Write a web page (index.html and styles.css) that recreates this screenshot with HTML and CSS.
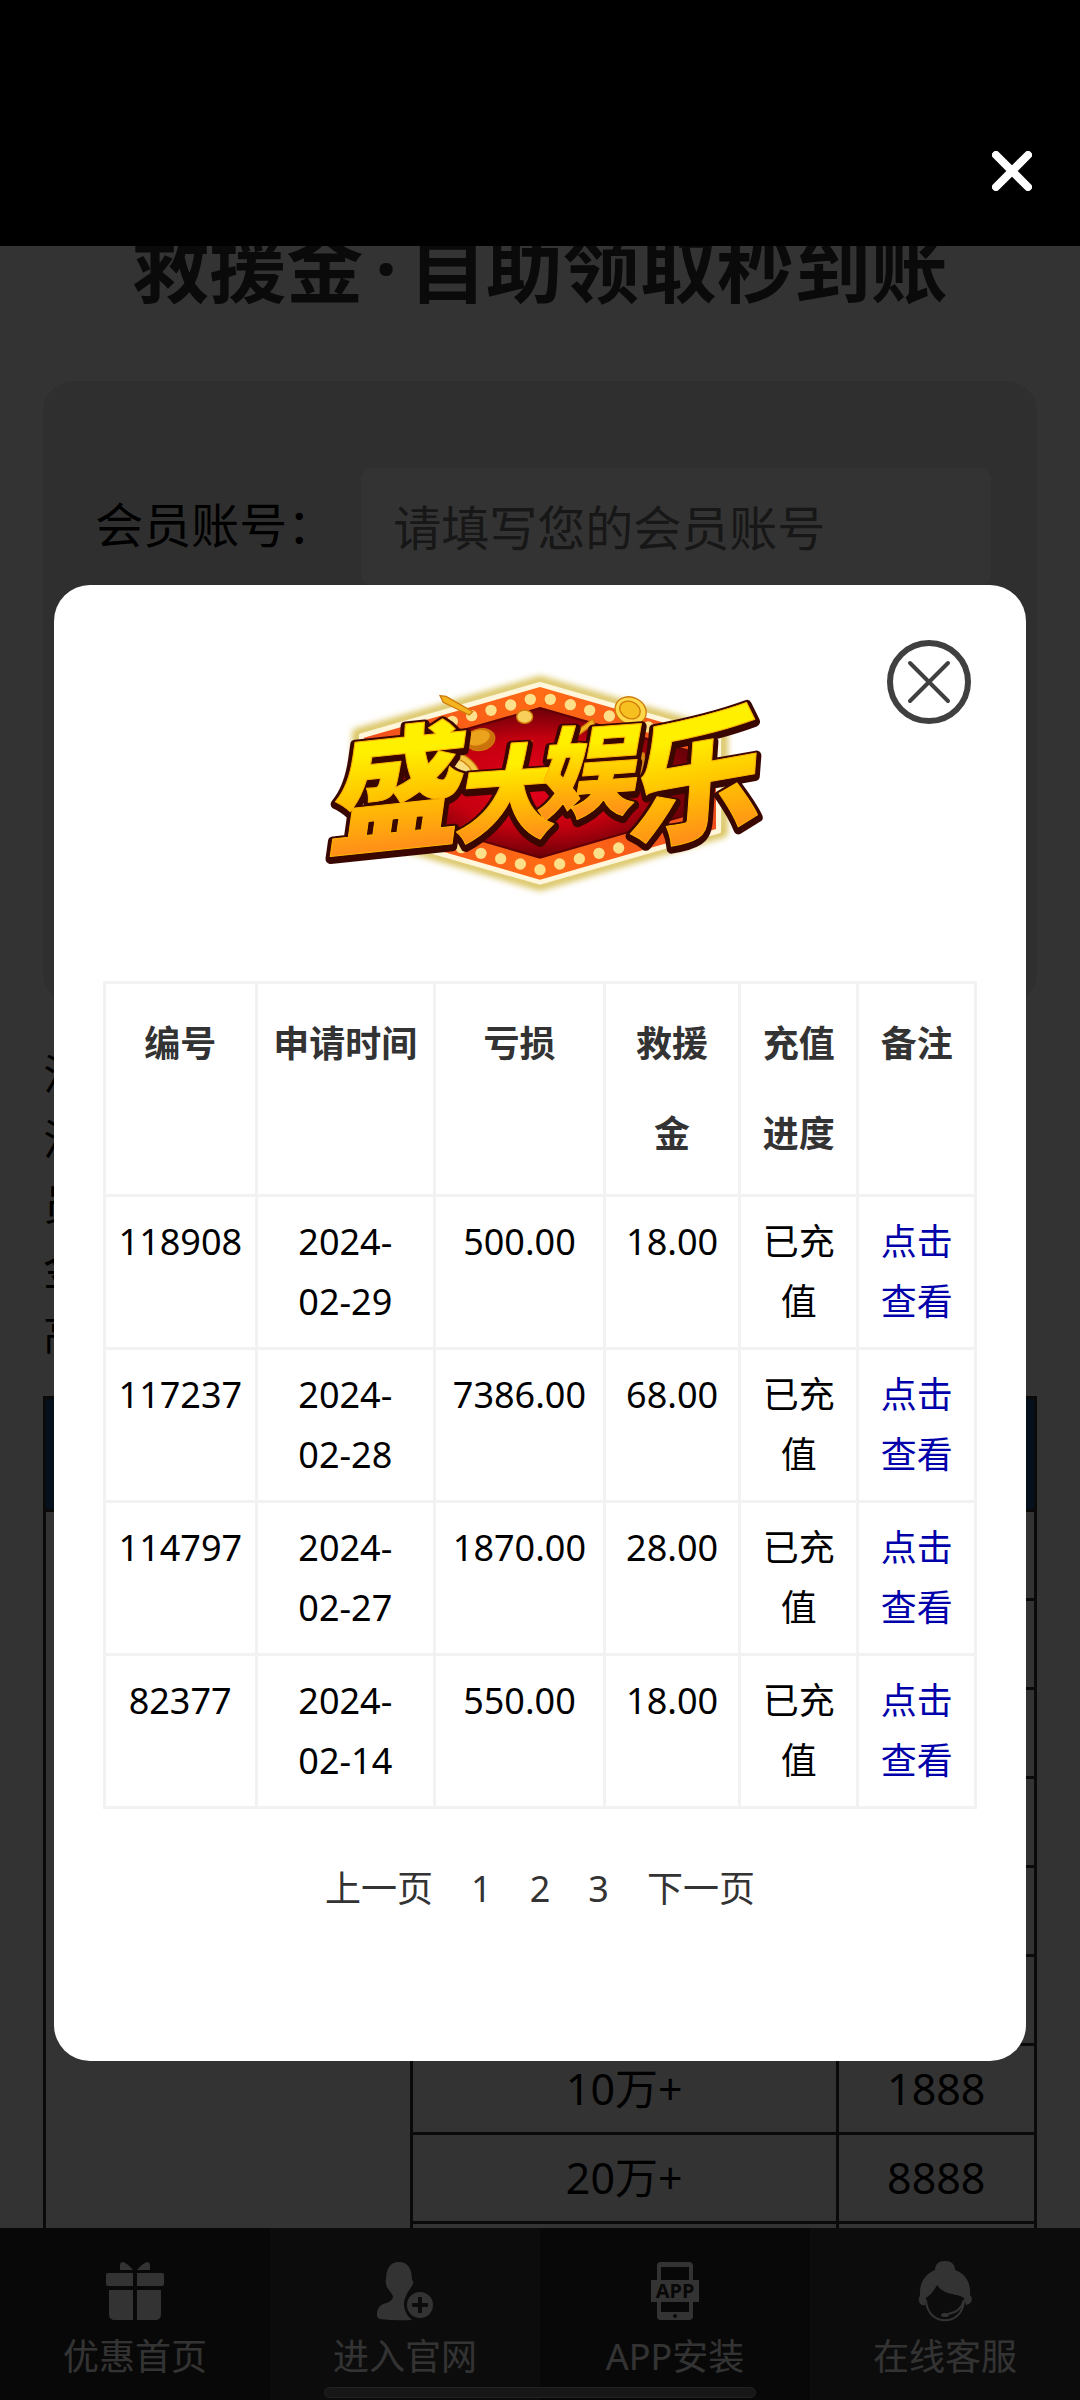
FILE: index.html
```html
<!DOCTYPE html>
<html lang="zh-CN">
<head>
    <meta charset="UTF-8">
    <meta name="viewport" content="width=device-width, initial-scale=1">
    <title>救援金</title>
    <link rel="stylesheet" href="styles.css">
</head>
<body>
    <header class="topbar">
        <button class="topbar-close" type="button" aria-label="关闭页面">
            <svg viewBox="0 0 40 40"><path d="M4 4L36 36M36 4L4 36"/></svg>
        </button>
    </header>

    <div class="stage">
        <main class="page">
            <h1>救援金<span class="dot">·</span>自助领取秒到账</h1>
            <form class="card">
                <label for="account">会员账号：</label>
                <input type="text" id="account" placeholder="请填写您的会员账号">
            </form>
            <p class="rules">注<br>活<br>员<br>金<br>高</p>
            <table class="bonus">
                <colgroup>
                    <col class="w-37"><col class="w-43"><col class="w-20">
                </colgroup>
                <thead>
                    <tr><th colspan="3"></th></tr>
                </thead>
                <tbody>
                    <tr><td rowspan="9"></td><td></td><td></td></tr>
                    <tr><td></td><td></td></tr>
                    <tr><td></td><td></td></tr>
                    <tr><td></td><td></td></tr>
                    <tr><td></td><td></td></tr>
                    <tr><td></td><td></td></tr>
                    <tr><td>10万+</td><td>1888</td></tr>
                    <tr><td>20万+</td><td>8888</td></tr>
                    <tr><td></td><td></td></tr>
                </tbody>
            </table>
        </main>

        <nav class="tabbar">
            <a href="#">
                <svg viewBox="0 0 58 58">
                    <path d="M27 8Q21 1 17 0Q14 0 14 4V8ZM31 8Q37 1 41 0Q44 0 44 4V8Z"/>
                    <path d="M2 11H27V24H2Q0 24 0 22V13Q0 11 2 11ZM31 11H56Q58 11 58 13V22Q58 24 56 24H31Z"/>
                    <path d="M3 28H27V58H9Q3 58 3 52ZM31 28H55V52Q55 58 49 58H31Z"/>
                </svg>
                <span>优惠首页</span>
            </a>
            <a href="#">
                <svg viewBox="0 0 58 58">
                    <path d="M23 0C32 0 36 7 36 18C39 20 36 24 34 27Q31 31 30 34C26 42 28 51 36 58Q18 59 4 57Q1 56 1 53C1 38 15 44 17 35Q17 33 13 28Q10 25 10 21Q9 19 10 18C10 7 14 0 23 0Z"/>
                    <path fill-rule="evenodd" d="M44 30A13 13 0 1 1 44 56A13 13 0 1 1 44 30ZM42 35V41H36V45H42V51H46V45H52V41H46V35Z"/>
                </svg>
                <span>进入官网</span>
            </a>
            <a href="#">
                <svg viewBox="0 0 58 58">
                    <path fill-rule="evenodd" d="M15 0H43Q47 0 47 4V54Q47 58 43 58H15Q11 58 11 54V4Q11 0 15 0ZM15 5V18H43V5ZM15 39V50H43V39Z"/>
                    <path d="M5 18H53V40H5Z"/>
                    <circle class="cut" cx="29" cy="54" r="2"/>
                    <text class="cut app-text" x="29" y="36" text-anchor="middle">APP</text>
                </svg>
                <span>APP安装</span>
            </a>
            <a href="#">
                <svg viewBox="0 0 58 58">
                    <path d="M19 8C19 2 23 -1 29 -1S39 2 39 8C50 12 55 21 54 33Q57 36 55 40Q53 43 50 43L48 36C42 31 28 34 21 23Q17 31 10 36L9 43Q4 44 3 39Q2 36 4 34C3 21 9 12 19 8Z"/>
                    <path class="line" d="M10 38C11 65 47 65 48 38"/>
                    <path class="line" d="M48 38Q45 50 32 52"/>
                    <ellipse cx="29" cy="53" rx="4" ry="2"/>
                </svg>
                <span>在线客服</span>
            </a>
        </nav>

        <div class="overlay">
            <section class="dialog" role="dialog" aria-modal="true">
                <button class="dialog-close" type="button" aria-label="关闭">
                    <svg viewBox="0 0 86 86">
                        <circle cx="43" cy="43" r="39"/>
                        <path d="M24 24L62 62M62 24L24 62"/>
                    </svg>
                </button>

                <svg class="logo" viewBox="72 80 1296 690" role="img" aria-label="盛大娱乐">
                    <defs>
                        <linearGradient id="gold" x1="0" y1="0" x2="0" y2="1">
                            <stop offset="0.3" stop-color="#fff000"/>
                            <stop offset="0.55" stop-color="#ffc400"/>
                            <stop offset="0.85" stop-color="#ff8c1a"/>
                        </linearGradient>
                        <radialGradient id="red">
                            <stop offset="0" stop-color="#e8001c"/>
                            <stop offset="0.6" stop-color="#c4000f"/>
                            <stop offset="1" stop-color="#6b0008"/>
                        </radialGradient>
                        <linearGradient id="rim" x1="0" y1="0" x2="1" y2="0">
                            <stop offset="0" stop-color="#f0501c"/>
                            <stop offset="0.5" stop-color="#ff6a14"/>
                            <stop offset="1" stop-color="#f0501c"/>
                        </linearGradient>
                        <filter id="glow" x="-10%" y="-10%" width="120%" height="120%">
                            <feGaussianBlur stdDeviation="10"/>
                        </filter>
                    </defs>
                    <!-- marquee board -->
                    <path d="M720 120L1270 278V578L720 738L170 578V278Z" fill="none" stroke="#d9c25c" stroke-width="26" stroke-linejoin="round" filter="url(#glow)"/>
                    <path d="M720 130L1258 284V574L720 728L182 574V284Z" fill="#fff6dc" stroke="#fff6dc" stroke-width="10" stroke-linejoin="round"/>
                    <path d="M720 140L1248 292V566L720 718L192 566V292Z" fill="url(#rim)"/>
                    <path d="M720 203L1190 338V516L720 652L250 516V338Z" fill="url(#red)" stroke="#5e0006" stroke-width="6"/>
                    <g fill="#ffe08a">
                        <circle cx="457" cy="243" r="17"/><circle cx="515" cy="226" r="17"/>
                        <circle cx="573" cy="210" r="17"/><circle cx="632" cy="194" r="17"/>
                        <circle cx="691" cy="177" r="17"/><circle cx="751" cy="177" r="17"/>
                        <circle cx="811" cy="193" r="17"/><circle cx="869" cy="210" r="17"/>
                        <circle cx="928" cy="227" r="17"/><circle cx="1045" cy="260" r="17"/>
                        <circle cx="1223" cy="320" r="17"/>
                        <circle cx="425" cy="606" r="17"/><circle cx="484" cy="622" r="17"/>
                        <circle cx="543" cy="639" r="17"/><circle cx="602" cy="655" r="17"/>
                        <circle cx="661" cy="671" r="17"/><circle cx="720" cy="688" r="17"/>
                        <circle cx="779" cy="671" r="17"/><circle cx="838" cy="655" r="17"/>
                        <circle cx="897" cy="639" r="17"/><circle cx="956" cy="623" r="17"/>
                    </g>
                    <!-- coins -->
                    <g fill="#f5b51e" stroke="#d07a0a" stroke-width="4">
                        <path d="M420 166L438 168L518 214L508 224L430 186Z"/>
                        <ellipse cx="542" cy="298" rx="43" ry="32" fill="#c9720c" transform="rotate(-15 542 298)"/>
                        <ellipse cx="534" cy="292" rx="38" ry="24" fill="#eba21c" transform="rotate(-15 534 292)"/>
                        <ellipse cx="674" cy="229" rx="24" ry="20" fill="#f7cf5a"/>
                        <ellipse cx="992" cy="211" rx="48" ry="40" fill="#ffd84a" transform="rotate(25 992 211)"/>
                        <ellipse cx="990" cy="209" rx="32" ry="25" fill="#f5c020" transform="rotate(25 990 209)"/>
                        <ellipse cx="475" cy="388" rx="74" ry="46" fill="#f3c545" transform="rotate(35 475 388)"/>
                        <ellipse cx="475" cy="388" rx="50" ry="28" fill="#f9dc7c" transform="rotate(35 475 388)"/>
                        <path d="M958 330L1032 338L1050 440L1000 448L955 424Z" fill="#d98a18"/>
                        <path d="M664 322L695 304L688 318Z"/>
                        <path d="M824 276L878 236L884 250L836 284Z"/>
                    </g>
                    <g class="logo-edge">
                        <text x="60" y="606" font-size="400" transform="rotate(-6 270 430)">盛</text>
                        <text x="450" y="584" font-size="310" transform="rotate(-4 605 470)">大</text>
                        <text x="696" y="514" font-size="300" transform="rotate(-4 850 400)">娱</text>
                        <text x="950" y="578" font-size="410" transform="rotate(-10 1160 420)">乐</text>
                    </g>
                    <g class="logo-face" fill="url(#gold)">
                        <text x="60" y="598" font-size="400" transform="rotate(-6 270 430)">盛</text>
                        <text x="450" y="576" font-size="310" transform="rotate(-4 605 470)">大</text>
                        <text x="696" y="506" font-size="300" transform="rotate(-4 850 400)">娱</text>
                        <text x="950" y="570" font-size="410" transform="rotate(-10 1160 420)">乐</text>
                    </g>
                </svg>

                <table class="records">
                    <colgroup>
                        <col class="c-id"><col class="c-date"><col class="c-loss">
                        <col class="c-aid"><col class="c-state"><col class="c-note">
                    </colgroup>
                    <thead>
                        <tr>
                            <th>编号</th>
                            <th>申请时间</th>
                            <th>亏损</th>
                            <th>救援金</th>
                            <th>充值进度</th>
                            <th>备注</th>
                        </tr>
                    </thead>
                    <tbody>
                        <tr>
                            <td>118908</td>
                            <td>2024-<br>02-29</td>
                            <td>500.00</td>
                            <td>18.00</td>
                            <td>已充值</td>
                            <td><a href="#">点击查看</a></td>
                        </tr>
                        <tr>
                            <td>117237</td>
                            <td>2024-<br>02-28</td>
                            <td>7386.00</td>
                            <td>68.00</td>
                            <td>已充值</td>
                            <td><a href="#">点击查看</a></td>
                        </tr>
                        <tr>
                            <td>114797</td>
                            <td>2024-<br>02-27</td>
                            <td>1870.00</td>
                            <td>28.00</td>
                            <td>已充值</td>
                            <td><a href="#">点击查看</a></td>
                        </tr>
                        <tr>
                            <td>82377</td>
                            <td>2024-<br>02-14</td>
                            <td>550.00</td>
                            <td>18.00</td>
                            <td>已充值</td>
                            <td><a href="#">点击查看</a></td>
                        </tr>
                    </tbody>
                </table>

                <div class="pager">
                    <a href="#">上一页</a>
                    <a href="#">1</a>
                    <a href="#">2</a>
                    <a href="#">3</a>
                    <a href="#">下一页</a>
                </div>
            </section>
        </div>
        <div class="home-bar"></div>
    </div>
</body>
</html>
```
FILE: styles.css
```css
* {
    box-sizing: border-box;
}
body {
    margin: 0;
    height: 100vh;
    display: flex;
    flex-direction: column;
    background-color: #fff;
    color: #000;
    font-family: "Noto Sans", "Noto Sans CJK SC", sans-serif;
    font-size: 36px;
}
a {
    text-decoration: none;
}
button {
    padding: 0;
    border: none;
    background: none;
    cursor: pointer;
}
svg {
    display: block;
}

/* top bar */
.topbar {
    flex: none;
    height: 246px;
    padding: 96px 48px 0;
    display: flex;
    align-items: center;
    justify-content: flex-end;
    background-color: #000;
}
.topbar-close svg {
    width: 40px;
    height: 40px;
    fill: none;
    stroke: #fff;
    stroke-width: 8;
    stroke-linecap: round;
}
.stage {
    position: relative;
    flex: 1;
    min-height: 0;
    display: flex;
    flex-direction: column;
    overflow: hidden;
}

/* page under the overlay */
.page {
    flex: 1;
    min-height: 0;
    padding: 0 4%;
    overflow: hidden;
}
h1 {
    margin: -28px 0 63px;
    color: #333;
    font-size: 77px;
    line-height: 100px;
    text-align: center;
}
.dot {
    margin: 0 12px;
}
.card {
    min-height: 622px;
    padding: 87px 46px 0 52px;
    display: flex;
    align-items: flex-start;
    border-radius: 30px;
    background-color: #ebebeb;
    font-size: 48px;
    line-height: 114px;
}
.card label {
    flex: none;
    width: 266px;
    white-space: nowrap;
}
.card input {
    flex: 1;
    min-width: 0;
    height: 118px;
    padding: 0 32px;
    border: none;
    border-radius: 12px;
    background-color: #fff;
    font: inherit;
}
.card input::placeholder {
    color: #757575;
}
.rules {
    margin: 38px 0 30px;
    font-size: 42px;
    line-height: 65px;
}
.bonus {
    width: 100%;
    table-layout: fixed;
    border-collapse: collapse;
    font-size: 43px;
    line-height: 60px;
    text-align: center;
}
.bonus th,
.bonus td {
    height: 89px;
    padding: 0;
    border: 3px solid #333;
}
.bonus th {
    height: 113px;
    background-color: #14508c;
}
.w-37 {
    width: 37%;
}
.w-43 {
    width: 43%;
}
.w-20 {
    width: 20%;
}

/* bottom tabs */
.tabbar {
    flex: none;
    display: flex;
}
.tabbar a {
    flex: 1;
    height: 172px;
    padding-top: 34px;
    display: flex;
    flex-direction: column;
    align-items: center;
    gap: 12px;
    background-color: #2a2a2a;
    color: #fff;
    line-height: 50px;
}
.tabbar a:nth-child(even) {
    background-color: #3c3c3c;
}
.tabbar svg {
    width: 58px;
    height: 58px;
    fill: #fff;
    overflow: visible;
}
.tabbar .cut {
    fill: #2a2a2a;
}
.tabbar .line {
    fill: none;
    stroke: #fff;
    stroke-width: 2;
}
.app-text {
    font-size: 20px;
    font-weight: bold;
}
.home-bar {
    position: absolute;
    left: 30%;
    right: 30%;
    bottom: 2px;
    height: 11px;
    border: 1px solid #222;
    border-radius: 6px;
    background-color: #171717;
}

/* overlay and dialog */
.overlay {
    position: absolute;
    inset: 0;
    display: flex;
    align-items: center;
    justify-content: center;
    background-color: rgba(0, 0, 0, 0.8);
}
.dialog {
    position: relative;
    width: 90%;
    padding: 82px 0 142px;
    display: flex;
    flex-direction: column;
    align-items: center;
    border-radius: 36px;
    background-color: #fff;
}
.dialog-close {
    position: absolute;
    top: 54px;
    right: 54px;
}
.dialog-close svg {
    width: 86px;
    height: 86px;
    fill: none;
    stroke: #404040;
    stroke-width: 6;
    stroke-linecap: round;
}
.dialog-close path {
    stroke-width: 4;
}
.logo {
    width: 432px;
    height: 230px;
    overflow: visible;
    font-style: italic;
    font-weight: 900;
}
.logo-edge {
    fill: #3a0600;
    stroke: #3a0600;
    stroke-width: 30;
    stroke-linejoin: round;
}
.logo-face {
    stroke: #ffb400;
    stroke-width: 3;
    stroke-linejoin: round;
}
.records {
    width: 90%;
    margin-top: 84px;
    table-layout: fixed;
    border-collapse: collapse;
    text-align: center;
    line-height: 60px;
}
.records th,
.records td {
    padding: 15px 13px;
    border: 3px solid #f2f2f2;
    vertical-align: top;
}
.records th {
    color: #333;
    line-height: 90px;
}
.records a {
    color: #0000aa;
}
.c-id {
    width: 152px;
}
.c-date {
    width: 178px;
}
.c-loss {
    width: 170px;
}
.c-aid {
    width: 135px;
}
.c-state,
.c-note {
    width: 118px;
}
.pager {
    margin-top: 50px;
    display: flex;
    gap: 38px;
    line-height: 60px;
}
.pager a {
    color: #333;
}
```
